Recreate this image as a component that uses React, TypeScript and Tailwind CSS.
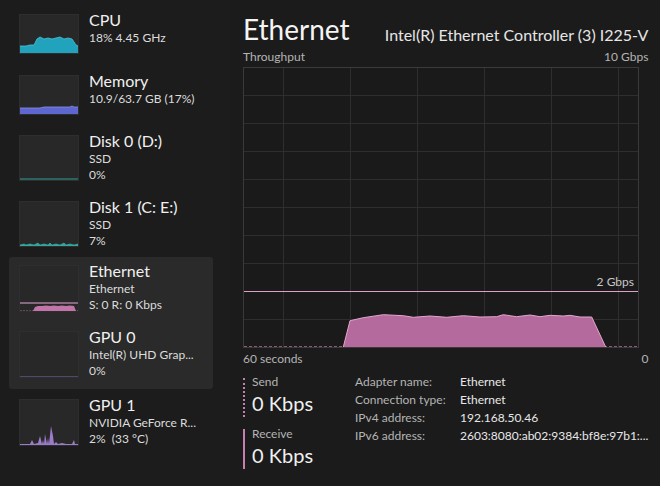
import React from "react";

const font = { fontFamily: "Lato, 'Noto Sans', 'Liberation Sans', sans-serif" };

function Thumb({ h, children }: { h: number; children?: React.ReactNode }) {
  return (
    <div className="relative w-[60px] shrink-0 bg-[#282828] border border-[#2e2e2e]" style={{ height: h }}>
      <svg className="absolute inset-0" width="58" height={h - 2} viewBox={`0 0 58 ${h - 2}`} preserveAspectRatio="none">
        {children}
      </svg>
    </div>
  );
}

type Item = {
  title: string;
  lines: string[];
  pt: number;
  h: number;
  th: number;
  graph: React.ReactNode;
};

function SideItem({ it }: { it: Item }) {
  return (
    <div className="flex pl-[10px]" style={{ paddingTop: it.pt, height: it.h }}>
      <Thumb h={it.th}>{it.graph}</Thumb>
      <div className="ml-[10px] -mt-[4px] flex flex-col">
        <div className="text-[16px] leading-[20px] text-[#f0f0f0]">{it.title}</div>
        {it.lines.map((l, i) => (
          <div key={i} className="text-[12px] leading-[16px] text-[#dcdcdc] whitespace-pre">
            {l}
          </div>
        ))}
      </div>
    </div>
  );
}

const cpuGraph = (
  <>
    <path d="M0 38 L0 31 L6 31 L10 30 L14 30 L17 24 L20 22 L24 24 L28 23 L32 24 L36 23 L40 22 L44 24 L48 23 L52 24 L54 27 L56 30 L58 31 L58 38 Z" fill="#22a3bd" />
    <path d="M0 31 L6 31 L10 30 L14 30 L17 24 L20 22 L24 24 L28 23 L32 24 L36 23 L40 22 L44 24 L48 23 L52 24 L54 27 L56 30 L58 31" fill="none" stroke="#49c5db" strokeWidth="0.8" />
  </>
);
const memGraph = (
  <>
    <path d="M0 38 L0 32 L20 32 L24 31 L50 31 L52 30 L54 31 L58 31 L58 38 Z" fill="#5e66cf" />
    <path d="M0 32 L20 32 L24 31 L50 31 L52 30 L54 31 L58 31" fill="none" stroke="#8a90e6" strokeWidth="0.8" />
  </>
);
const disk0Graph = <line x1="0" y1="43" x2="58" y2="43" stroke="#2e9e98" strokeWidth="1" />;
const disk1Graph = (
  <path d="M0 43 L4 42 L6 43 L10 42 L14 43 L18 41 L20 43 L24 42 L28 43 L30 41 L32 43 L36 42 L40 43 L44 41 L46 43 L50 42 L54 43 L58 42 L58 44 L0 44 Z" fill="#2fa49a" stroke="#3ab4aa" strokeWidth="0.6" />
);
const ethGraph = (
  <>
    <line x1="0" y1="37" x2="58" y2="37" stroke="#e2a8d2" strokeWidth="1" />
    <path d="M13 45 L15 41 L18 40 L22 40 L26 39.5 L30 40 L34 39.5 L38 40 L42 39.5 L46 40 L50 39.5 L54 40 L56 45 Z" fill="#c274ab" />
    <line x1="0" y1="45" x2="58" y2="45" stroke="#b97aa6" strokeWidth="0.8" strokeDasharray="2 1" />
  </>
);
const gpu0Graph = <line x1="0" y1="45" x2="58" y2="45" stroke="#7d68b5" strokeWidth="1" />;
const gpu1Graph = (
  <path d="M0 45 L0 44 L10 44 L12 40 L14 44 L18 43 L20 36 L22 44 L23 40 L24 44 L25 34 L27 44 L28 38 L29 44 L31 26 L33 36 L34 44 L36 42 L38 44 L42 43 L46 44 L52 44 L54 40 L55 44 L58 44 L58 45 Z" fill="#9c7bc9" />
);

const items1: Item[] = [
  { title: "CPU", lines: ["18% 4.45 GHz"], pt: 6, h: 61, th: 40, graph: cpuGraph },
  { title: "Memory", lines: ["10.9/63.7 GB (17%)"], pt: 6, h: 60, th: 40, graph: memGraph },
  { title: "Disk 0 (D:)", lines: ["SSD", "0%"], pt: 6, h: 66, th: 46, graph: disk0Graph },
  { title: "Disk 1 (C: E:)", lines: ["SSD", "7%"], pt: 6, h: 62, th: 46, graph: disk1Graph },
];
const eth: Item = { title: "Ethernet", lines: ["Ethernet", "S: 0 R: 0 Kbps"], pt: 8, h: 66, th: 47, graph: ethGraph };
const gpu0: Item = { title: "GPU 0", lines: ["Intel(R) UHD Grap...", "0%"], pt: 8, h: 66, th: 47, graph: gpu0Graph };
const gpu1: Item = { title: "GPU 1", lines: ["NVIDIA GeForce R...", "2%  (33 °C)"], pt: 10, h: 66, th: 47, graph: gpu1Graph };

const topPts: [number, number][] = [
  [107, 253.7], [120.3, 250.7], [140.3, 247.7], [160.3, 248.7], [170.3, 250.3], [187, 249], [203.7, 250.3],
  [220.3, 248.7], [237, 250], [253.7, 249.7], [260.3, 247.7], [273.7, 249.7], [287, 248], [297, 249.7],
  [307, 248.3], [320.3, 249], [327, 248.3], [337, 250], [348.7, 250],
];

function Chart() {
  const W = 394;
  const H = 279;
  const top = topPts.map(([x, y]) => `L${x - 1} ${y - 1}`).join(" ");
  const fill = `M99.3 ${H} ${top} L361.7 ${H} Z`;
  const line = `M99.3 ${H} ${top} L361.7 ${H}`;
  const hs = [28, 56, 84, 112, 140, 168, 196, 224, 252];
  const vs = [39, 106, 173, 240, 307, 374];
  return (
    <div className="relative w-[396px] h-[281px] border border-[#3a3a3a] bg-[#1a1a1a]">
      <svg className="absolute left-0 top-0" width={W} height={H} viewBox={`0 0 ${W} ${H}`}>
        {hs.map((y) => (
          <line key={y} x1="0" x2={W} y1={y - 0.5} y2={y - 0.5} stroke="#2e2e2e" strokeWidth="1" />
        ))}
        {vs.map((x) => (
          <line key={x} x1={x + 0.5} x2={x + 0.5} y1="0" y2={H} stroke="#2e2e2e" strokeWidth="1" />
        ))}
        <line x1="0" x2={W} y1="223.5" y2="223.5" stroke="#dca0cb" strokeWidth="1" />
        <line x1="0" x2={W} y1={H - 0.5} y2={H - 0.5} stroke="#8a5a7c" strokeWidth="1" strokeDasharray="3 2" />
        <path d={fill} fill="#b56a9d" />
        <path d={line} fill="none" stroke="#e2a6cf" strokeWidth="1" />
      </svg>
      <div className="absolute right-[4px] top-[207px] text-[12px] leading-[14px] text-[#c8c8c8]">2 Gbps</div>
    </div>
  );
}

export default function App() {
  return (
    <div className="w-[660px] h-[486px] flex bg-[#1c1c1c] overflow-hidden" style={font}>
      <div className="w-[230px] shrink-0 pt-[8px] pl-[9px] pr-[17px]">
        {items1.map((it) => (
          <SideItem key={it.title} it={it} />
        ))}
        <div className="bg-[#2a2a2a] rounded-[3px]">
          <SideItem it={eth} />
          <SideItem it={gpu0} />
        </div>
        <SideItem it={gpu1} />
      </div>
      <div className="flex-1 pl-[13px] pr-[21px] bg-[#1b1b1b]">
        <div className="flex items-end justify-between pt-[11px] h-[47px]">
          <div className="text-[28px] leading-[36px] text-[#f4f4f4]">Ethernet</div>
          <div className="text-[16px] leading-[22px] text-[#e6e6e6] mb-[1px]">Intel(R) Ethernet Controller (3) I225-V</div>
        </div>
        <div className="flex justify-between text-[12px] leading-[20px] text-[#b4b4b4]">
          <span>Throughput</span>
          <span>10 Gbps</span>
        </div>
        <Chart />
        <div className="flex justify-between text-[12px] leading-[18px] text-[#b4b4b4] mt-[2px]">
          <span>60 seconds</span>
          <span>0</span>
        </div>
        <div className="flex items-start mt-[8px]">
          <div className="w-[112px] shrink-0 flex flex-col">
            <div className="flex h-[39px] mt-[2px]">
              <div className="w-[2px] border-l-2 border-dotted border-[#c77fb0] h-[39px]" />
              <div className="ml-[7px] -mt-[5px]">
                <div className="text-[12px] leading-[18px] text-[#b4b4b4]">Send</div>
                <div className="text-[20px] leading-[24px] text-[#f0f0f0]">0 Kbps</div>
              </div>
            </div>
            <div className="flex h-[40px] mt-[12px]">
              <div className="w-[2px] bg-[#c77fb0] h-[40px]" />
              <div className="ml-[7px] -mt-[4px]">
                <div className="text-[12px] leading-[18px] text-[#b4b4b4]">Receive</div>
                <div className="text-[20px] leading-[24px] text-[#f0f0f0]">0 Kbps</div>
              </div>
            </div>
          </div>
          <div className="grid grid-cols-[105px_auto] content-start self-start text-[12px] leading-[18px] -mt-[3px]">
            <span className="text-[#b4b4b4]">Adapter name:</span>
            <span className="text-[#e8e8e8]">Ethernet</span>
            <span className="text-[#b4b4b4]">Connection type:</span>
            <span className="text-[#e8e8e8]">Ethernet</span>
            <span className="text-[#b4b4b4]">IPv4 address:</span>
            <span className="text-[#e8e8e8]">192.168.50.46</span>
            <span className="text-[#b4b4b4]">IPv6 address:</span>
            <span className="text-[#e8e8e8]">2603:8080:ab02:9384:bf8e:97b1:...</span>
          </div>
        </div>
      </div>
    </div>
  );
}
